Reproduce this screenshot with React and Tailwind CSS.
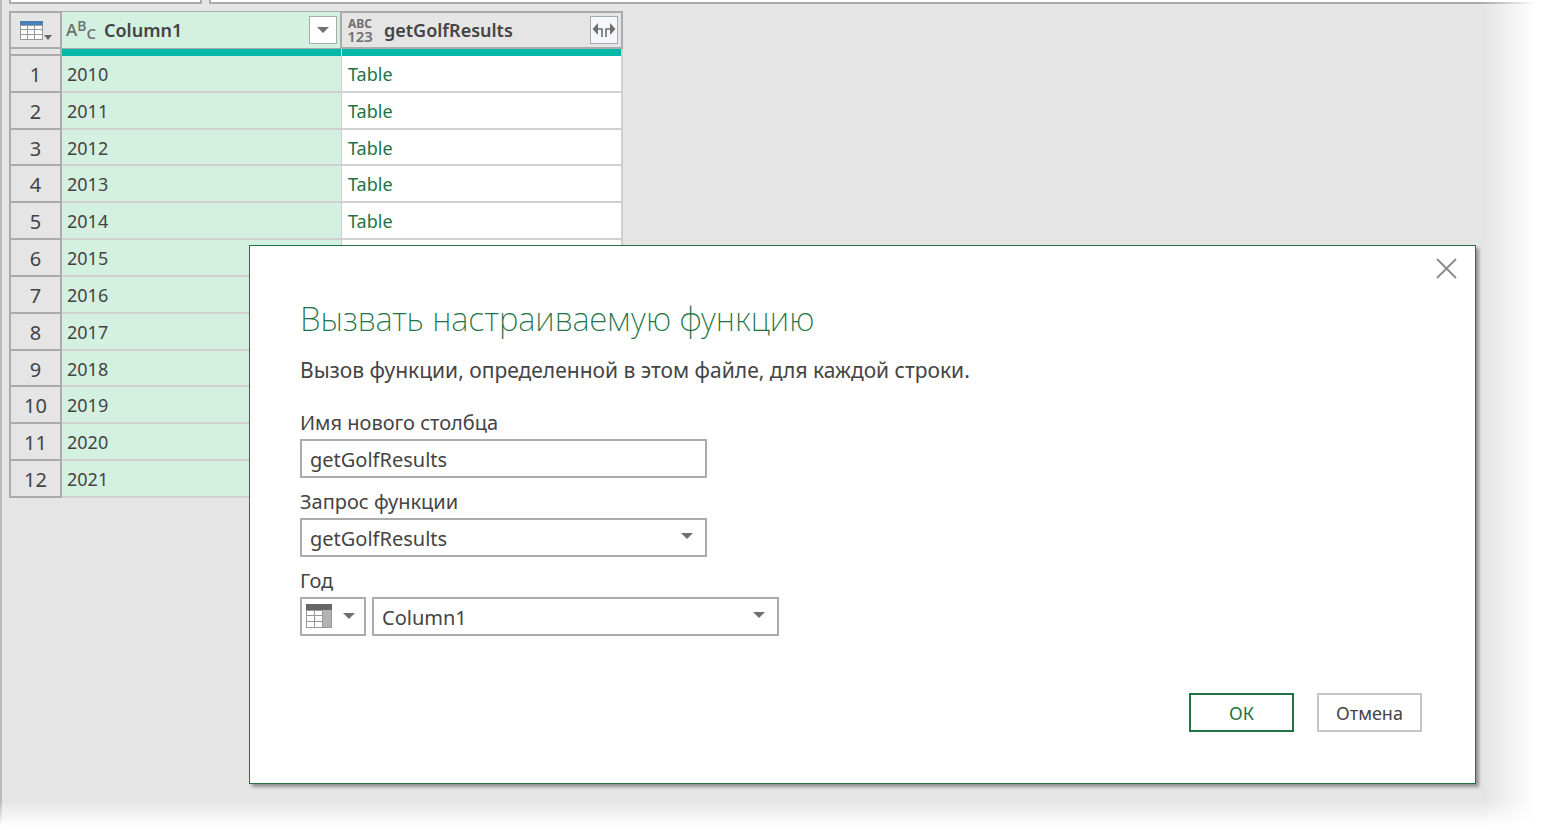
import { useState } from 'react';

const rows = [
  { year: '2010', result: 'Table' },
  { year: '2011', result: 'Table' },
  { year: '2012', result: 'Table' },
  { year: '2013', result: 'Table' },
  { year: '2014', result: 'Table' },
  { year: '2015' },
  { year: '2016' },
  { year: '2017' },
  { year: '2018' },
  { year: '2019' },
  { year: '2020' },
  { year: '2021' },
];

function Caret({ className = '' }) {
  return (
    <svg className={`h-[6px] w-[12px] ${className}`} viewBox="0 0 12 6" aria-hidden="true">
      <path d="M0 0H12L6 6Z" fill="#707070" />
    </svg>
  );
}

function TableMenuIcon() {
  return (
    <svg className="h-[22px] w-[34px]" viewBox="0 0 34 22" shapeRendering="crispEdges" aria-hidden="true">
      <rect x="1" y="2" width="23" height="19" fill="#999" />
      <rect x="1" y="2" width="23" height="4" fill="#4a7fb8" />
      <g fill="#fff">
        <rect x="2" y="7" width="6" height="3" />
        <rect x="9" y="7" width="6" height="3" />
        <rect x="16" y="7" width="7" height="3" />
        <rect x="2" y="11" width="6" height="4" />
        <rect x="9" y="11" width="6" height="4" />
        <rect x="16" y="11" width="7" height="4" />
        <rect x="2" y="16" width="6" height="4" />
        <rect x="9" y="16" width="6" height="4" />
        <rect x="16" y="16" width="7" height="4" />
      </g>
      <path d="M25 16H33L29 21Z" fill="#666" shapeRendering="auto" />
    </svg>
  );
}

function ColumnIcon() {
  return (
    <svg className="h-[24px] w-[26px]" viewBox="0 0 26 24" shapeRendering="crispEdges" aria-hidden="true">
      <rect width="26" height="24" fill="#999" />
      <rect width="26" height="6" fill="#666" />
      <rect x="17" y="6" width="8" height="17" fill="#b3b3b3" />
      <g fill="#fff">
        <rect x="1" y="7" width="7" height="4" />
        <rect x="9" y="7" width="7" height="4" />
        <rect x="1" y="12" width="7" height="5" />
        <rect x="9" y="12" width="7" height="5" />
        <rect x="1" y="18" width="7" height="5" />
        <rect x="9" y="18" width="7" height="5" />
      </g>
    </svg>
  );
}

function ExpandIcon() {
  return (
    <svg className="h-[15px] w-[24px]" viewBox="0 0 24 15" aria-hidden="true">
      <path d="M0.500 6L6 0V12Z" fill="#707070" />
      <path d="M23.500 6L18 0V12Z" fill="#707070" />
      <path d="M5 6H10V14M19 6H14V14" fill="none" stroke="#707070" strokeWidth="1.600" />
    </svg>
  );
}

function TextTypeIcon() {
  return (
    <span className="flex h-[24px] w-[28px] items-center font-['Open_Sans',sans-serif] font-semibold text-[#707070]" aria-hidden="true">
      <span className="text-[17px] leading-[18px]">A</span>
      <span className="self-start text-[14px] leading-[16px]">B</span>
      <span className="self-end text-[15px] leading-[18px]">C</span>
    </span>
  );
}

function AnyTypeIcon() {
  return (
    <span className="flex w-[28px] flex-col items-center font-bold text-[#707070]" aria-hidden="true">
      <span className="text-[12px] leading-[12px]">ABC</span>
      <span className="text-[15px] leading-[13px] font-semibold">123</span>
    </span>
  );
}

function SelectField({ id, value, className }) {
  return (
    <div className={`relative ${className}`}>
      <select
        id={id}
        defaultValue={value}
        className="h-[39px] w-full appearance-none border-2 border-[#ababab] bg-white pt-[2px] pr-8 pl-2 text-[20px] text-[#444] outline-none"
      >
        <option>{value}</option>
      </select>
      <Caret className="pointer-events-none absolute top-[15px] right-[14px]" />
    </div>
  );
}

function QueryTable() {
  return (
    <table className="ml-[7px] h-[487px] w-[614px] table-fixed border-separate border-spacing-0 text-[#444]">
      <colgroup>
        <col className="w-[53px]" />
        <col className="w-[280px]" />
        <col className="w-[281px]" />
      </colgroup>
      <thead>
        <tr className="h-[38px]">
          <th className="border-2 border-[#ababab] p-0">
            <button type="button" aria-label="Меню таблицы" className="flex h-[34px] w-full items-center pl-2">
              <TableMenuIcon />
            </button>
          </th>
          <th className="border-y border-r-2 border-[#ababab] bg-[#d4f0e1] p-0">
            <div className="flex h-[36px] items-center pr-[3px] pl-1">
              <TextTypeIcon />
              <span className="ml-[10px] flex-1 text-left text-[18px] font-semibold">Column1</span>
              <button type="button" aria-label="Фильтр" className="flex size-7 items-center justify-center border border-[#ababab] bg-white">
                <Caret />
              </button>
            </div>
          </th>
          <th className="border-y-2 border-r-2 border-[#ababab] p-0">
            <div className="flex h-[34px] items-center pr-[3px] pl-[4px]">
              <AnyTypeIcon />
              <span className="ml-[10px] flex-1 text-left text-[18px] font-semibold">getGolfResults</span>
              <button type="button" aria-label="Развернуть" className="flex size-7 items-center justify-center border border-[#a5abb2] bg-[#f5f7fa]">
                <ExpandIcon />
              </button>
            </div>
          </th>
        </tr>
        <tr className="h-[7px]">
          <td className="border-x-2 border-b-2 border-[#ababab] p-0" />
          <td className="border-r border-[#d4f0e1] bg-[#00b7a8] p-0" />
          <td className="border-r-2 border-[#d0d0d0] bg-[#00b7a8] p-0" />
        </tr>
      </thead>
      <tbody>
        {rows.map(({ year, result }, i) => (
          <tr key={year}>
            <th scope="row" className="border-x-2 border-b-2 border-[#ababab] p-0 pt-[3px] text-center text-[20px] leading-7 font-normal">
              {i + 1}
            </th>
            <td className="border-r border-b-2 border-[#d0d0d0] bg-[#d4f0e1] p-0 pt-[1px] pl-[5px] text-[18px] leading-7">{year}</td>
            <td className="border-r-2 border-b-2 border-[#d0d0d0] bg-white p-0 pt-[1px] pl-[6px] text-[18px] leading-7">
              {result && <a href="#table" className="text-[#217346]">{result}</a>}
            </td>
          </tr>
        ))}
      </tbody>
    </table>
  );
}

function InvokeDialog() {
  const [name, setName] = useState('getGolfResults');
  return (
    <section
      role="dialog"
      aria-labelledby="dialog-title"
      className="absolute top-[245px] right-[66px] left-[249px] border border-[#217346] bg-white px-[50px] pt-[50px] pb-[51px] text-[#444] shadow-[3px_3px_3px_rgba(0,0,0,0.35)]"
    >
      <button type="button" aria-label="Закрыть" className="absolute top-3 right-[18px]">
        <svg className="size-[21px]" viewBox="0 0 21 21" aria-hidden="true">
          <path d="M1 1L20 20M20 1L1 20" stroke="#8a8a8a" strokeWidth="1.800" />
        </svg>
      </button>
      <h1 id="dialog-title" className="text-[33px] leading-[46px] font-extralight text-[#217346]">
        Вызвать настраиваемую функцию
      </h1>
      <p className="mt-3 text-[21px] leading-8">Вызов функции, определенной в этом файле, для каждой строки.</p>
      <form className="mt-[21px] flex flex-col gap-2 text-[20px]" onSubmit={(e) => e.preventDefault()}>
        <div>
          <label htmlFor="column-name" className="block leading-8">Имя нового столбца</label>
          <input
            id="column-name"
            value={name}
            onChange={(e) => setName(e.target.value)}
            className="block h-[39px] w-[407px] border-2 border-[#ababab] px-2 pt-[2px] outline-none"
          />
        </div>
        <div>
          <label htmlFor="function-query" className="block leading-8">Запрос функции</label>
          <SelectField id="function-query" value="getGolfResults" className="w-[407px]" />
        </div>
        <div>
          <label htmlFor="year" className="block leading-8">Год</label>
          <div className="flex gap-[6px]">
            <button type="button" aria-label="Тип значения" className="flex h-[39px] w-[66px] items-center justify-between border-2 border-[#ababab] pr-[9px] pb-[2px] pl-1">
              <ColumnIcon />
              <Caret />
            </button>
            <SelectField id="year" value="Column1" className="w-[407px]" />
          </div>
        </div>
        <div className="mt-[49px] flex justify-end gap-[23px] pr-[3px] text-[18px]">
          <button type="submit" className="h-[39px] w-[105px] border-2 border-[#217346] pt-[2px] text-[#217346]">ОК</button>
          <button type="button" className="h-[39px] w-[105px] border-2 border-[#c6c6c6] pt-[2px]">Отмена</button>
        </div>
      </form>
    </section>
  );
}

export default function App() {
  return (
    <main className="relative flex min-h-screen overflow-hidden bg-[#e5e5e5] font-['Noto_Sans',sans-serif]">
      <div className="w-[2px] bg-[#bababa]" />
      <div className="flex-1">
        <div className="mb-[7px] flex h-1 gap-[7px] pl-[7px]">
          <div className="w-[193px] border-x-2 border-b-2 border-[#ababab] bg-white" />
          <div className="flex-1 border-b-2 border-l-2 border-[#ababab] bg-white" />
        </div>
        <QueryTable />
      </div>
      <div className="pointer-events-none absolute inset-y-0 right-0 w-[58px] bg-linear-to-r from-transparent to-white to-90%" />
      <div className="pointer-events-none absolute inset-x-0 bottom-0 h-[30px] bg-linear-to-b from-transparent to-white to-90%" />
      <InvokeDialog />
    </main>
  );
}
